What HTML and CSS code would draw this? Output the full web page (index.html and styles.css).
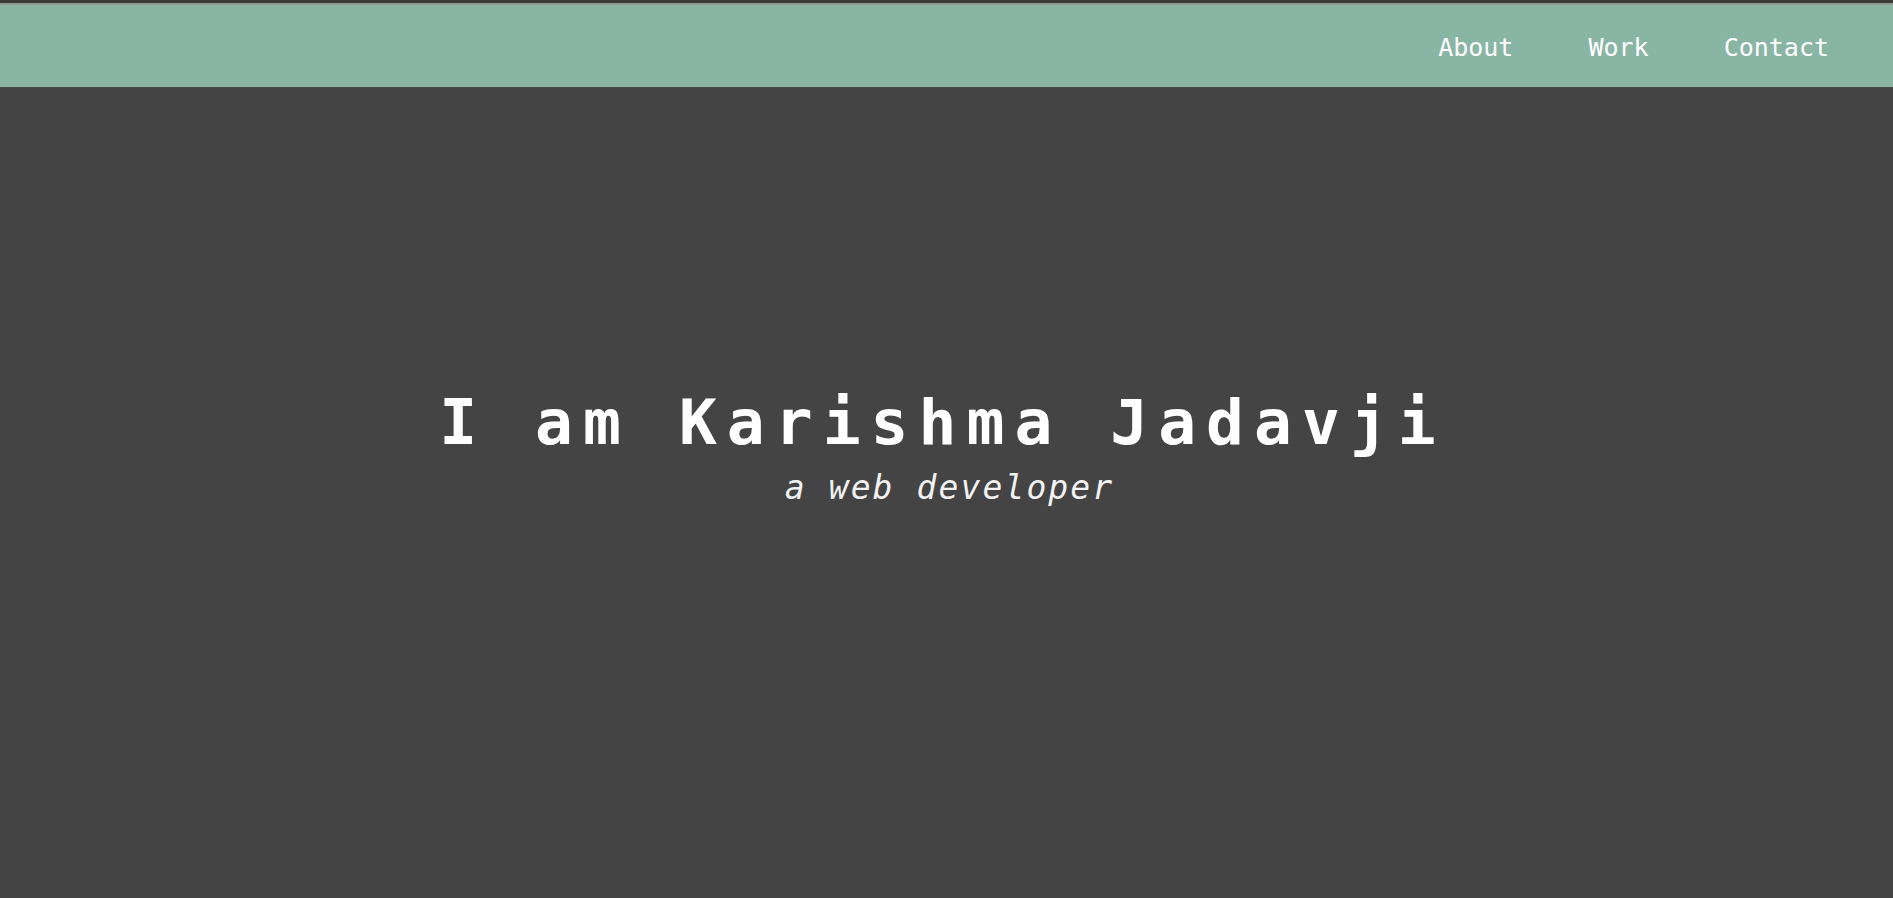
FILE: index.html
```html
<!DOCTYPE html>
<html lang="en">
<head>
<meta charset="utf-8">
<title>Karishma Jadavji</title>
<link rel="stylesheet" href="styles.css">
</head>
<body>
<div class="topline"></div>
<header class="nav">
  <a class="nav-link" href="#about">About</a>
  <a class="nav-link" href="#work">Work</a>
  <a class="nav-link" href="#contact">Contact</a>
</header>
<main class="hero">
  <h1 class="hero-title">I am Karishma Jadavji</h1>
  <p class="hero-sub">a web developer</p>
</main>
</body>
</html>
```

FILE: styles.css
```css
* { box-sizing: border-box; }
html, body {
  margin: 0;
  padding: 0;
  background: #444444;
  height: 100%;
  overflow: hidden;
  font-family: "DejaVu Sans Mono", "Liberation Mono", monospace;
  color: #ffffff;
}
.topline {
  height: 5px;
  background: #3a3a3a;
  border-bottom: 2px solid #8e9893;
}
.nav {
  height: 82px;
  background: #89b5a5;
  display: flex;
  justify-content: flex-end;
  align-items: center;
  gap: 75px;
  padding-right: 64px;
  padding-top: 2px;
}
.nav-link {
  color: #ffffff;
  text-decoration: none;
  font-size: 25px;
  line-height: 1;
}
.hero {
  padding-top: 304px;
  display: flex;
  flex-direction: column;
  align-items: center;
}
.hero-title {
  margin: 0;
  font-size: 63px;
  line-height: 1;
  font-weight: bold;
  letter-spacing: 10px;
  padding-right: 8px;
  white-space: nowrap;
}
.hero-sub {
  margin: 17px 0 0;
  font-size: 33px;
  line-height: 1;
  font-style: italic;
  letter-spacing: 2.1px;
  padding-left: 6px;
  color: #f2f2f2;
}
```
